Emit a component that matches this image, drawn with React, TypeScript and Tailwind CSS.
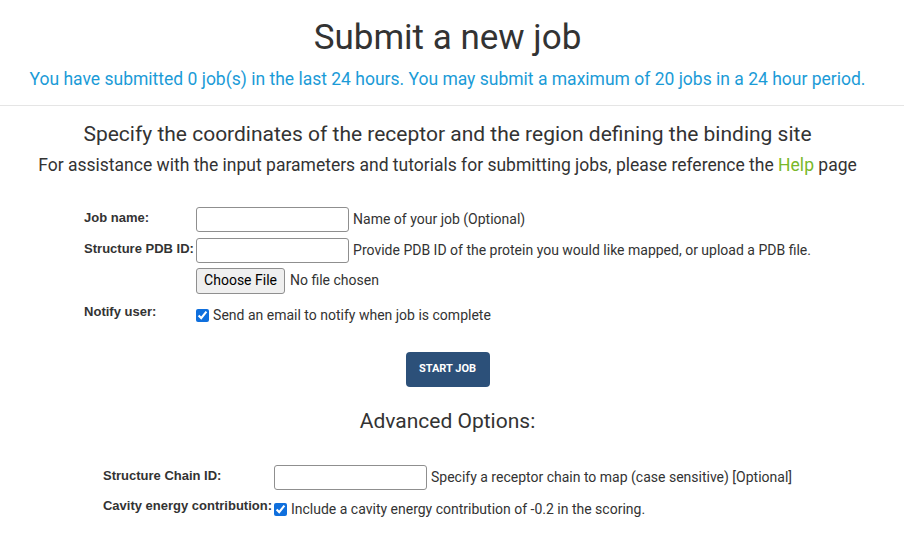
import type { ReactNode } from "react";

const TextBox = () => (
  <input
    type="text"
    className="h-[25px] w-[153px] rounded-[3px] border border-[#8f8f8f] bg-white px-1 text-[13px] outline-none"
  />
);

const Check = () => (
  <input type="checkbox" defaultChecked className="m-0 h-[13px] w-[13px] accent-[#0f6fdd]" />
);

const Row = ({ label, width, children }: { label: string; width: string; children: ReactNode }) => (
  <div className="flex items-start">
    <div className={`${width} shrink-0 pt-[1px] font-['Liberation_Sans',sans-serif] text-[13px] font-bold text-[#333]`}>
      {label}
    </div>
    <div className="flex items-center gap-1">{children}</div>
  </div>
);

const Hint = ({ children }: { children: ReactNode }) => <span className="text-[14px] text-[#333]">{children}</span>;

export default function App() {
  return (
    <div className="min-h-screen bg-white font-['Roboto',sans-serif] text-[#333]">
      <header className="border-b border-[#e5e5e5] pb-[13px] pt-[14px]">
        <div className="w-[895px] text-center">
          <h1 className="text-[35px] leading-[48px]">Submit a new job</h1>
          <p className="mt-[4px] text-[17.5px] text-[#1b9bd7]">
            You have submitted 0 job(s) in the last 24 hours. You may submit a maximum of 20 jobs in a 24 hour period.
          </p>
        </div>
      </header>

      <div className="w-[895px]">
        <section className="text-center">
          <h2 className="mt-[14px] text-[21px] leading-[28px]">
            Specify the coordinates of the receptor and the region defining the binding site
          </h2>
          <p className="mt-[4px] text-[17.5px]">
            For assistance with the input parameters and tutorials for submitting jobs, please reference the{" "}
            <a className="text-[#78b82a]">Help</a> page
          </p>
        </section>

        <form className="mx-auto mt-[28px] flex w-fit flex-col gap-[6px]">
          <Row label="Job name:" width="w-[112px]">
            <TextBox />
            <Hint>Name of your job (Optional)</Hint>
          </Row>
          <Row label="Structure PDB ID:" width="w-[112px]">
            <TextBox />
            <Hint>Provide PDB ID of the protein you would like mapped, or upload a PDB file.</Hint>
          </Row>
          <div className="-mt-[1px] ml-[112px] flex items-center gap-[5px] text-[14px]">
            <button
              type="button"
              className="h-[26px] rounded-[3px] border border-[#8f8f8f] bg-[#efefef] px-[7px] text-[14px] text-black"
            >
              Choose File
            </button>
            <span>No file chosen</span>
          </div>
          <div className="mt-[2px] flex items-start">
            <div className="w-[112px] shrink-0 font-['Liberation_Sans',sans-serif] text-[13px] font-bold">
              Notify user:
            </div>
            <label className="mt-[3px] flex items-center gap-[4px] text-[14px]">
              <Check />
              Send an email to notify when job is complete
            </label>
          </div>
        </form>

        <div className="mt-[26px] flex justify-center">
          <button
            type="button"
            className="h-[35px] w-[84px] rounded-[4px] bg-[#2c5079] text-[11px] font-bold text-white"
          >
            START JOB
          </button>
        </div>

        <h2 className="mt-[20px] text-center text-[21px] leading-[28px]">Advanced Options:</h2>

        <div className="mx-auto mt-[30px] flex w-fit flex-col gap-[6px]">
          <Row label="Structure Chain ID:" width="w-[171px]">
            <TextBox />
            <Hint>Specify a receptor chain to map (case sensitive) [Optional]</Hint>
          </Row>
          <div className="flex items-start">
            <div className="w-[171px] shrink-0 font-['Liberation_Sans',sans-serif] text-[13px] font-bold">
              Cavity energy contribution:
            </div>
            <label className="mt-[3px] flex items-center gap-[4px] text-[14px]">
              <Check />
              Include a cavity energy contribution of -0.2 in the scoring.
            </label>
          </div>
        </div>
      </div>
    </div>
  );
}
